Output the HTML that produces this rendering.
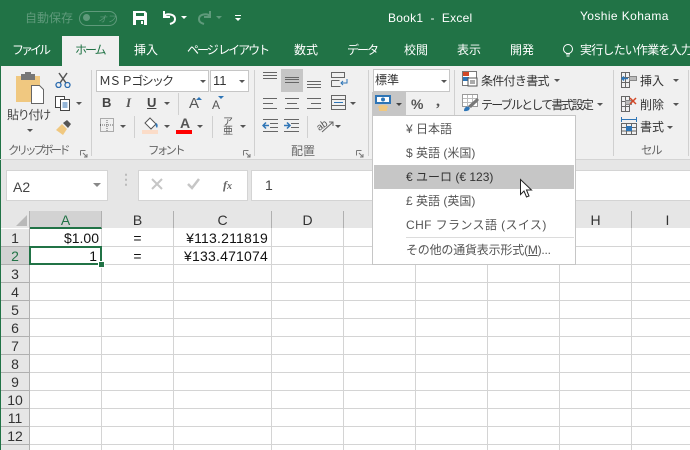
<!DOCTYPE html>
<html lang="ja"><head><meta charset="utf-8">
<style>
html,body{margin:0;padding:0;background:#fff}
#p{position:relative;width:690px;height:450px;overflow:hidden;background:#fff;font-family:"Liberation Sans","Noto Sans CJK JP",sans-serif;font-size:12px;color:#444}
#p div,#p svg{position:absolute}
.t{white-space:nowrap;line-height:16px}
.w{color:#fff}
.tab{color:#fff;top:42px;font-size:12px}
.ar{width:0;height:0;border-left:3px solid transparent;border-right:3px solid transparent;border-top:3px solid #555}
.sep{width:1px;background:#d0d0d0}
.rh{left:1px;width:28px;height:17px;background:#e6e6e6;border-bottom:1px solid #b0b0b0;text-align:center;font-size:14px;line-height:19px;color:#333}
.ch{top:211px;height:17px;background:#e6e6e6;text-align:center;font-size:14px;line-height:18px;color:#333;border-right:1px solid #b0b0b0}
.c{font-size:14px;line-height:17px;white-space:nowrap;color:#111}
.m{font-size:12px;left:406px;white-space:nowrap;color:#555;line-height:16px}
</style></head><body><div id="p">

<!-- title / tabs -->
<div style="left:0;top:0;width:690px;height:66px;background:#217346"></div>
<div class="t" style="left:25px;top:10px;color:#5f9a7b;font-size:12px">自動保存</div>
<div style="left:79px;top:11px;width:36px;height:13px;border:1px solid #5f9a7b;border-radius:8px"></div>
<div style="left:83px;top:14px;width:7px;height:7px;border-radius:50%;background:#5f9a7b"></div>
<div class="t" style="left:98px;top:11px;color:#5f9a7b;font-size:9px;font-style:italic">オフ</div>
<svg style="left:132px;top:10px" width="16" height="16"><path d="M1 1h12l2 2v12H1z" fill="#fff"/><rect x="4" y="3" width="8" height="3" fill="#217346"/><rect x="4" y="10" width="8" height="5" fill="#217346"/><rect x="9" y="11" width="2" height="3" fill="#fff"/></svg>
<svg style="left:161px;top:10px" width="16" height="16" fill="none" stroke="#fff" stroke-width="2"><path d="M3 1v6h6"/><path d="M3 6c3-3 11-2 11 3 0 3-2 4-5 5"/></svg>
<div class="ar" style="left:181px;top:16px;border-top-color:#fff"></div>
<svg style="left:197px;top:10px" width="16" height="16" fill="none" stroke="#5f9a7b" stroke-width="2"><path d="M13 1v6H7"/><path d="M13 6C10 3 2 4 2 9c0 3 2 4 5 5"/></svg>
<div class="ar" style="left:216px;top:16px;border-top-color:#5f9a7b"></div>
<div style="left:235px;top:15px;width:6px;height:1px;background:#fff"></div>
<div class="ar" style="left:235px;top:18px;border-top-color:#fff"></div>
<div class="t w" style="left:388px;top:10px;font-size:12px;letter-spacing:.25px">Book1&nbsp; -&nbsp; Excel</div>
<div class="t w" style="left:580px;top:8px;font-size:12px;letter-spacing:.4px">Yoshie Kohama</div>

<div style="left:62px;top:36px;width:57px;height:30px;background:#f0f0f0"></div>
<div class="t tab" style="left:12px;letter-spacing:-3px">ファイル</div>
<div class="t" style="left:75px;top:42px;color:#217346;letter-spacing:-2px">ホーム</div>
<div class="t tab" style="left:134px">挿入</div>
<div class="t tab" style="left:187px;letter-spacing:-2px">ページ レイアウト</div>
<div class="t tab" style="left:294px">数式</div>
<div class="t tab" style="left:347px;letter-spacing:-2px">データ</div>
<div class="t tab" style="left:404px">校閲</div>
<div class="t tab" style="left:457px">表示</div>
<div class="t tab" style="left:510px">開発</div>
<svg style="left:562px;top:43px" width="12" height="16" fill="none" stroke="#fff"><circle cx="6" cy="6" r="4.500"/><path d="M4 11h4M4.500 13h3"/></svg>
<div class="t tab" style="left:580px;letter-spacing:-.8px">実行したい作業を入力</div>

<!-- ribbon -->
<div style="left:0;top:66px;width:690px;height:94px;background:#f0f0f0"></div>
<div style="left:0;top:160px;width:690px;height:51px;background:#e6e6e6"></div>
<div style="left:0;top:66px;width:1px;height:384px;background:#217346"></div>
<div style="left:0;top:159px;width:690px;height:1px;background:#d4d4d4"></div>

<!-- clipboard -->
<svg style="left:15px;top:72px" width="30" height="34"><rect x="1" y="4" width="24" height="26" fill="#f0c880"/><rect x="6" y="2" width="14" height="6" fill="#777"/><rect x="10" y="0" width="6" height="3" fill="#777"/><path d="M16.500 13.500h8l4 4v14h-12z" fill="#fff" stroke="#666"/></svg>
<div class="t" style="left:7px;top:107px;font-size:12px;letter-spacing:-1.300px;color:#444">貼り付け</div>
<div class="ar" style="left:27px;top:129px"></div>
<svg style="left:55px;top:72px" width="16" height="16" fill="none" stroke="#555"><path d="M4 1l7 10M12 1L5 11" stroke-width="1.500"/><circle cx="3.500" cy="13" r="2.500" stroke="#2b6cb0" stroke-width="1.300"/><circle cx="12.500" cy="13" r="2.500" stroke="#2b6cb0" stroke-width="1.300"/></svg>
<svg style="left:55px;top:96px" width="16" height="16" fill="#fff" stroke="#444"><rect x=".5" y=".5" width="9" height="11"/><rect x="5.500" y="3.500" width="9" height="11"/><path d="M7.500 7h5M7.500 9h5M7.500 11h5" stroke="#2b6cb0"/></svg>
<div class="ar" style="left:76px;top:102px"></div>
<svg style="left:55px;top:119px" width="17" height="17"><path d="M1 11l6-6 5 5-4 6z" fill="#f0c880"/><path d="M8 4l4-3 4 4-3 4z" fill="#555"/></svg>
<div class="t" style="left:8px;top:143px;font-size:11.500px;color:#666;letter-spacing:-3px">クリップボード</div>
<svg style="left:80px;top:150px" width="8" height="8" fill="none" stroke="#777"><path d="M.5 .5h5M.500 .5v5M3 3l4 4M7 4v3H4"/></svg>
<div class="sep" style="left:91px;top:70px;height:86px"></div>

<!-- font -->
<div style="left:96px;top:70px;width:111px;height:20px;background:#fff;border:1px solid #c6c6c6"></div>
<div class="t" style="left:99px;top:73px;color:#333;font-size:12px;letter-spacing:-1.750px">ＭＳ Ｐゴシック</div>
<div class="ar" style="left:200px;top:80px"></div>
<div style="left:210px;top:70px;width:37px;height:20px;background:#fff;border:1px solid #c6c6c6"></div>
<div class="t" style="left:213px;top:73px;color:#333;font-size:13px">11</div>
<div class="ar" style="left:239px;top:80px"></div>
<div class="t" style="left:102px;top:95px;font-weight:bold;font-size:13px;color:#444">B</div>
<div class="t" style="left:126px;top:95px;font-style:italic;font-size:13px;font-family:'Liberation Serif',serif;font-weight:bold;color:#555">I</div>
<div class="t" style="left:147px;top:95px;font-weight:bold;font-size:13px;color:#444;text-decoration:underline">U</div>
<div class="ar" style="left:164px;top:102px"></div>
<div class="sep" style="left:178px;top:93px;height:22px"></div>
<div class="t" style="left:189px;top:96px;font-size:15px;color:#555">A</div>
<svg style="left:196px;top:96px" width="6" height="4"><path d="M0 4l3-3 3 3z" fill="#2e75b6"/></svg>
<div class="t" style="left:212px;top:97px;font-size:12px;color:#555">A</div>
<svg style="left:218px;top:96px" width="6" height="4"><path d="M0 0l3 3 3-3z" fill="#2e75b6"/></svg>
<svg style="left:100px;top:118px" width="14" height="14" fill="none" stroke="#666" stroke-dasharray="1 1"><rect x=".5" y=".5" width="13" height="13"/><path d="M7 0v14M0 7h14"/></svg>
<div class="ar" style="left:120px;top:125px"></div>
<div class="sep" style="left:134px;top:116px;height:22px"></div>
<svg style="left:143px;top:117px" width="16" height="14"><path d="M7 1l6 6-5 5-6-6z" fill="#fff" stroke="#555"/><path d="M13 6c2 1 2 3 1 5-1-1-2-3-1-5z" fill="#2e75b6"/></svg>
<div style="left:142px;top:130px;width:16px;height:4px;background:#fbdcc8"></div>
<div class="ar" style="left:164px;top:125px"></div>
<div class="t" style="left:180px;top:115px;font-weight:bold;font-size:14px;color:#555">A</div>
<div style="left:176px;top:130px;width:16px;height:4px;background:#f00"></div>
<div class="ar" style="left:197px;top:125px"></div>
<div class="sep" style="left:212px;top:116px;height:22px"></div>
<div class="t" style="left:222px;top:118px;font-size:10px;line-height:9px;color:#555;width:12px;text-align:center">ア<br>亜</div>
<div class="ar" style="left:240px;top:125px"></div>
<div class="t" style="left:148px;top:143px;font-size:11.500px;color:#666;letter-spacing:-2.800px">フォント</div>
<svg style="left:243px;top:150px" width="8" height="8" fill="none" stroke="#777"><path d="M.5 .5h5M.500 .5v5M3 3l4 4M7 4v3H4"/></svg>
<div class="sep" style="left:254px;top:70px;height:86px"></div>

<!-- alignment -->
<div style="left:281px;top:69px;width:22px;height:23px;background:#c6c6c6"></div>
<svg style="left:262px;top:70px" width="110" height="68" fill="none" stroke="#666">
<path d="M1 2.500h14M1 5.500h14M1 8.500h14"/>
<path d="M23 7.500h14M23 9.500h14M23 12.500h14"/>
<path d="M45 11.500h14M45 14.500h14M45 17.500h14"/>
<path d="M1 28.500h14M1 33.500h10M1 38.500h14"/>
<path d="M23 28.500h14M25 33.500h10M23 38.500h14"/>
<path d="M45 28.500h14M49 33.500h10M45 38.500h14"/>
<path d="M1 49.500h15M8 53.500h8M8 57.500h8M1 61.500h15"/>
<path d="M22 49.500h15M29 53.500h8M29 57.500h8M22 61.500h15"/>
<path d="M7 55.500H1m3-3l-3 3 3 3" stroke="#2e75b6" stroke-width="1.500"/>
<path d="M22 55.500h6m-3-3l3 3-3 3" stroke="#2e75b6" stroke-width="1.500"/>
<path d="M69.500 2.500h13v5h-13zM69.500 10.500h8M69.500 10.500v6h9"/>
<path d="M85 9v4h-6m2-2l-2 2 2 2" stroke="#2e75b6"/>
<path d="M69.500 25.500h14v14h-14zM70 29.500h13M70 35.500h13"/>
<path d="M72 32.500h9" stroke="#2e75b6"/>
</svg>
<div class="ar" style="left:350px;top:102px"></div>
<div class="sep" style="left:307px;top:116px;height:22px"></div>
<svg style="left:315px;top:117px" width="20" height="16" fill="none" stroke="#666"><text x="1" y="12" font-size="10" fill="#555" stroke="none" transform="rotate(-35 6 8)">ab</text><path d="M7 15l11-10m-4 0h4v4"/></svg>
<div class="ar" style="left:335px;top:125px"></div>
<div class="t" style="left:291px;top:143px;font-size:12px;color:#666">配置</div>
<svg style="left:356px;top:150px" width="8" height="8" fill="none" stroke="#777"><path d="M.5 .5h5M.500 .5v5M3 3l4 4M7 4v3H4"/></svg>
<div class="sep" style="left:368px;top:70px;height:86px"></div>

<!-- number -->
<div style="left:373px;top:69px;width:75px;height:21px;background:#fff;border:1px solid #c6c6c6"></div>
<div class="t" style="left:375px;top:72px;color:#333;font-size:12px">標準</div>
<div class="ar" style="left:441px;top:80px"></div>
<div style="left:372px;top:92px;width:34px;height:23px;background:#c6c6c6"></div>
<svg style="left:375px;top:95px" width="18" height="17"><rect x="0" y="0" width="16" height="9" fill="#2e75b6"/><rect x="2" y="2" width="12" height="5" fill="#fff"/><circle cx="8" cy="4.500" r="2" fill="#2e75b6"/><ellipse cx="8" cy="12" rx="5" ry="2" fill="#f0c880"/><rect x="4" y="12" width="8" height="4" fill="#f0c880"/></svg>
<div class="ar" style="left:396px;top:103px;border-top-color:#444"></div>
<div class="t" style="left:411px;top:96px;font-size:14px;font-weight:bold;color:#555">%</div>
<div class="t" style="left:436px;top:94px;font-size:16px;font-weight:bold;color:#555;font-family:'Liberation Serif',serif">,</div>
<div class="sep" style="left:454px;top:70px;height:46px"></div>

<!-- styles -->
<svg style="left:462px;top:71px" width="16" height="16"><rect x=".5" y=".5" width="14" height="14" fill="#fff" stroke="#777"/><rect x="1" y="1" width="6" height="4" fill="#d24726"/><rect x="1" y="6" width="6" height="4" fill="#2e75b6"/><rect x="6" y="7" width="9" height="8" fill="#fff" stroke="#555"/><path d="M8 10h5M8 12h5" stroke="#555"/></svg>
<div class="t" style="left:481px;top:73px;color:#333;font-size:12px;letter-spacing:-.7px">条件付き書式</div>
<div class="ar" style="left:554px;top:79px"></div>
<svg style="left:462px;top:94px" width="18" height="18"><rect x=".5" y=".5" width="15" height="12" fill="#fff" stroke="#999"/><path d="M5.500 1v12M10.500 1v12M1 4.500h14M1 8.500h14" stroke="#bbb"/><path d="M2 17c0-4 3-5 5-4s0 5-5 4z" fill="#2e75b6"/><path d="M6 12l9-8 2 2-8 8z" fill="#777"/></svg>
<div class="t" style="left:481px;top:97px;color:#333;font-size:12px;letter-spacing:-1.800px">テーブルとして書式設定</div>
<div class="ar" style="left:597px;top:103px"></div>

<div class="sep" style="left:613px;top:70px;height:86px"></div>

<!-- cells -->
<svg style="left:620px;top:71px" width="18" height="66" fill="none" stroke="#666">
<path d="M1.500 1.500h8v5h-8zM1.500 6.500v5h8v-5M1.500 11.500v5h8v-5M5.500 2v14"/><rect x="9.500" y="5.500" width="7" height="4" fill="#bbb" stroke="#888"/><path d="M8 7.500H2m2-2l-2 2 2 2" stroke="#2e75b6" stroke-width="1.500"/>
<path d="M1.500 25.500h8v5h-8zM1.500 30.500v5h8v-5M1.500 35.500v5h8v-5M5.500 26v14"/><rect x="5.500" y="29.500" width="6" height="4" fill="#bbb" stroke="#888"/><path d="M10 27l6 6m0-6l-6 6" stroke="#d24726" stroke-width="1.500"/>
<path d="M1.500 52.500h15v11h-15zM1 56.500h15M1 60h15M6.500 53v10M11.500 53v10"/><rect x="6" y="55" width="6" height="5" fill="#2e75b6" stroke="none"/><path d="M1 48.500h16M1.500 46v5M16.500 46v5" stroke="#2e75b6"/>
</svg>
<div class="t" style="left:640px;top:73px;color:#333;font-size:12px">挿入</div>
<div class="ar" style="left:673px;top:79px"></div>
<div class="t" style="left:640px;top:97px;color:#333;font-size:12px">削除</div>
<div class="ar" style="left:673px;top:103px"></div>
<div class="t" style="left:640px;top:119px;color:#333;font-size:12px">書式</div>
<div class="ar" style="left:667px;top:126px"></div>
<div class="t" style="left:641px;top:143px;font-size:11.500px;color:#666;letter-spacing:-1.500px">セル</div>
<div class="sep" style="left:688px;top:70px;height:86px"></div>

<!-- formula bar -->
<div style="left:6px;top:170px;width:100px;height:29px;background:#fff;border:1px solid #d4d4d4"></div>
<div class="t" style="left:13px;top:179px;font-size:14px;color:#444">A2</div>
<div class="ar" style="left:93px;top:183px;border-left-width:4px;border-right-width:4px;border-top:4px solid #888"></div>
<div class="t" style="left:119px;top:176px;color:#bbb;font-size:14px;font-weight:bold;line-height:6px">⋮</div>
<div style="left:138px;top:170px;width:108px;height:29px;background:#fff;border:1px solid #d4d4d4"></div>
<svg style="left:150px;top:177px" width="14" height="14" stroke="#c6c6c6" stroke-width="2"><path d="M2 2l10 10M12 2L2 12"/></svg>
<svg style="left:186px;top:177px" width="15" height="14" fill="none" stroke="#c6c6c6" stroke-width="2.500"><path d="M2 7l4 4 7-9"/></svg>
<div class="t" style="left:223px;top:177px;font-family:'Liberation Serif',serif;font-style:italic;font-weight:bold;color:#666;font-size:12px">f<span style="font-size:10px">x</span></div>
<div style="left:251px;top:170px;width:445px;height:29px;background:#fff;border:1px solid #d4d4d4"></div>
<div class="t" style="left:265px;top:177px;font-size:14px;color:#444">1</div>

<!-- grid -->
<svg style="left:0;top:211px" width="690" height="239" shape-rendering="crispEdges" stroke="#d4d4d4">
<path d="M101.500 17V239M173.500 17V239M271.500 17V239M343.500 17V239M415.500 17V239M487.500 17V239M559.500 17V239M631.500 17V239"/>
<path d="M30 35.500H690M30 53.500H690M30 71.500H690M30 89.500H690M30 107.500H690M30 125.500H690M30 143.500H690M30 161.500H690M30 179.500H690M30 197.500H690M30 215.500H690M30 233.500H690"/>
</svg>
<div style="left:1px;top:211px;width:689px;height:17px;background:#e6e6e6"></div>
<svg style="left:16px;top:215px" width="12" height="12"><path d="M11 0v11H0z" fill="#b9b9b9"/></svg>
<div class="ch" style="left:30px;width:71px;background:#d2d2d2;color:#217346;border-bottom:2px solid #217346;height:16px">A</div>
<div class="ch" style="left:102px;width:71px">B</div>
<div class="ch" style="left:174px;width:97px">C</div>
<div class="ch" style="left:272px;width:71px">D</div>
<div class="ch" style="left:344px;width:71px"></div>
<div class="ch" style="left:416px;width:71px"></div>
<div class="ch" style="left:488px;width:71px"></div>
<div class="ch" style="left:560px;width:71px">H</div>
<div class="ch" style="left:632px;width:71px">I</div>
<div style="left:29px;top:211px;width:1px;height:239px;background:#b0b0b0"></div>

<div class="rh" style="top:229px">1</div>
<div class="rh" style="top:247px;background:#d2d2d2;color:#217346">2</div>
<div class="rh" style="top:265px">3</div>
<div class="rh" style="top:283px">4</div>
<div class="rh" style="top:301px">5</div>
<div class="rh" style="top:319px">6</div>
<div class="rh" style="top:337px">7</div>
<div class="rh" style="top:355px">8</div>
<div class="rh" style="top:373px">9</div>
<div class="rh" style="top:391px">10</div>
<div class="rh" style="top:409px">11</div>
<div class="rh" style="top:427px">12</div>
<div class="rh" style="top:445px"></div>

<div class="c" style="left:30px;width:69px;top:230px;text-align:right">$1.00</div>
<div class="c" style="left:102px;width:71px;top:230px;text-align:center">=</div>
<div class="c" style="left:174px;width:94px;top:230px;text-align:right;letter-spacing:.2px">¥113.211819</div>
<div class="c" style="left:30px;width:67px;top:248px;text-align:right">1</div>
<div class="c" style="left:102px;width:71px;top:248px;text-align:center">=</div>
<div class="c" style="left:174px;width:94px;top:248px;text-align:right;letter-spacing:.2px">¥133.471074</div>
<div style="left:29px;top:246px;width:69px;height:15px;border:2px solid #217346"></div>
<div style="left:99px;top:262px;width:5px;height:5px;background:#217346;border:1px solid #fff;box-sizing:content-box;margin:-1px"></div>

<!-- dropdown -->
<div style="left:372px;top:115px;width:202px;height:148px;background:#fff;border:1px solid #c6c6c6"></div>
<div style="left:374px;top:165px;width:200px;height:24px;background:#c6c6c6"></div>
<div class="m" style="top:121px">¥ 日本語</div>
<div class="m" style="top:145px">$ 英語 (米国)</div>
<div class="m" style="top:169px;color:#333">€ ユーロ (€ 123)</div>
<div class="m" style="top:193px">£ 英語 (英国)</div>
<div class="m" style="top:217px;letter-spacing:.4px">CHF フランス語 (スイス)</div>
<div style="left:406px;top:237px;width:168px;height:1px;background:#dcdcdc"></div>
<div class="m" style="top:242px;letter-spacing:-.2px">その他の通貨表示形式(<u>M</u>)...</div>
<svg style="left:519px;top:178px" width="14" height="22"><path d="M1.500 1.500v15l3.500-3.500 2.500 6 2.500-1-2.500-6h5z" fill="#fff" stroke="#222"/></svg>

</div></body></html>
